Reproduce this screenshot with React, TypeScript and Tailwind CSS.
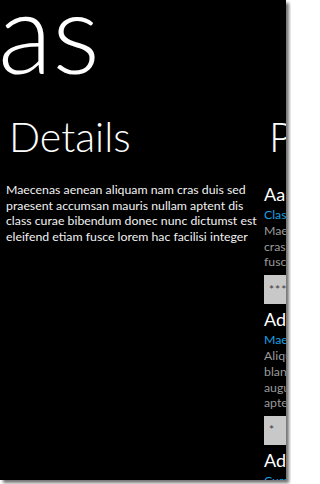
export default function App() {
  const groups = [
    {
      title: 'Aaron Class',
      sub: 'Classic curae',
      lines: ['Maecenas aenean aliquam', 'cras duis sed praesent', 'fusce lorem hac facilisi'],
      secret: '***',
    },
    {
      title: 'Adipiscing',
      sub: 'Maecenas nullam',
      lines: ['Aliquam nam cras duis', 'blandit mauris nullam', 'augue bibendum donec', 'aptent dis class curae'],
      secret: '*',
    },
    {
      title: 'Adelaide',
      sub: 'Curae etiam',
      lines: [],
      secret: '',
    },
  ];

  return (
    <div className="w-[291px] h-[484px] bg-white overflow-hidden font-['Lato','Open_Sans',sans-serif]">
      <div className="w-[286px] h-[480px] bg-black overflow-hidden shadow-[3px_3px_3px_rgba(0,0,0,0.55)]">
        <div className="text-[112px] font-light leading-none text-white mt-[-25px] ml-[-2px] whitespace-nowrap">as</div>

        <div className="flex mt-[29px]">
          {/* details item */}
          <div className="w-[258px] shrink-0 pl-[6px] overflow-hidden">
            <div className="text-[41px] font-light leading-none text-white ml-[3px]">Details</div>
            <p className="mt-[25px] text-[12.3px] leading-[15.7px] text-[#f2f2f2] whitespace-nowrap">
              Maecenas aenean aliquam nam cras duis sed
              <br />
              praesent accumsan mauris nullam aptent dis
              <br />
              class curae bibendum donec nunc dictumst est
              <br />
              eleifend etiam fusce lorem hac facilisi integer
            </p>
          </div>

          {/* passwords item */}
          <div className="w-[240px] shrink-0 ml-[6px]">
            <div className="text-[41px] font-light leading-none text-white ml-[5px] whitespace-nowrap">Passwords</div>
            <div className="mt-[25px] flex flex-col">
              {groups.map((g) => (
                <div key={g.title} className="flex flex-col whitespace-nowrap">
                  <div className="text-[18px] leading-[24px] text-white">{g.title}</div>
                  <div className="text-[12.3px] leading-[17px] text-[#1ba1e2]">{g.sub}</div>
                  {g.lines.map((l) => (
                    <div key={l} className="text-[12.3px] leading-[15.7px] text-[#9a9a9a]">
                      {l}
                    </div>
                  ))}
                  {g.secret && (
                    <div className="mt-[5px] mb-[3px] h-[29px] bg-[#c8c8c8] flex items-center px-[5px] text-[12px] text-[#3a3a3a] tracking-[1px]">
                      {g.secret}
                    </div>
                  )}
                </div>
              ))}
            </div>
          </div>
        </div>
      </div>
    </div>
  );
}
